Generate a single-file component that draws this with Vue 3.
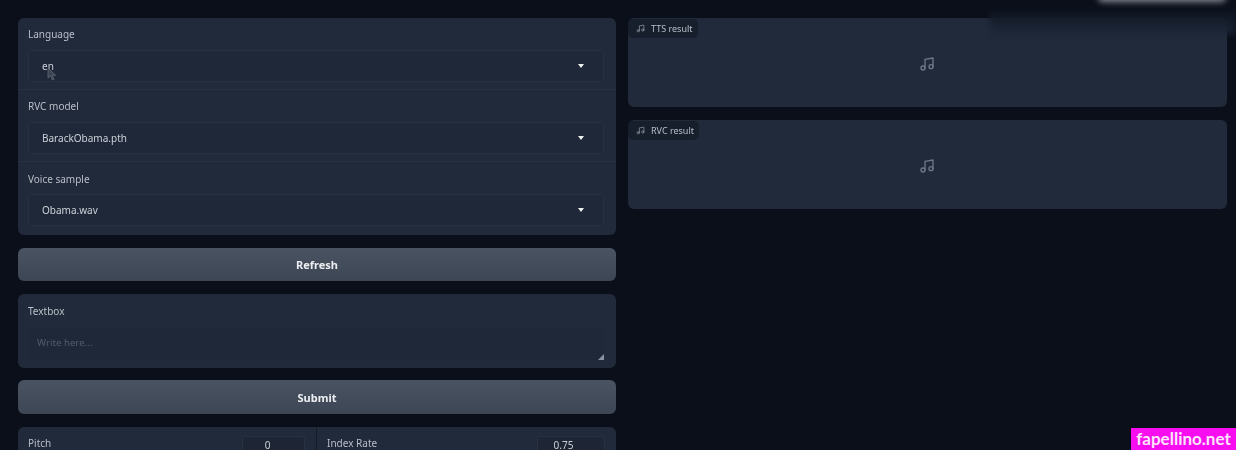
<script setup>
const selects = [
  { label: 'Language', value: 'en' },
  { label: 'RVC model', value: 'BarackObama.pth' },
  { label: 'Voice sample', value: 'Obama.wav' },
]
const results = ['TTS result', 'RVC result']
</script>

<template>
  <div class="page">
    <div class="cols">
      <div class="col">
        <div class="panel selects">
          <div v-for="s in selects" :key="s.label" class="field">
            <div class="label">{{ s.label }}</div>
            <div class="select">
              <span>{{ s.value }}</span>
              <i class="caret"></i>
            </div>
          </div>
        </div>
        <button class="btn refresh">Refresh</button>
        <div class="panel textbox">
          <div class="label">Textbox</div>
          <div class="area">
            <span class="ph">Write here...</span>
            <svg class="grip" viewBox="0 0 6 6" width="6" height="6"><path d="M6 0V6H0Z" fill="#8a93a3" /></svg>
          </div>
        </div>
        <button class="btn submit">Submit</button>
        <div class="panel sliders">
          <div class="slider">
            <span class="label">Pitch</span>
            <span class="num">0</span>
          </div>
          <div class="slider sep">
            <span class="label">Index Rate</span>
            <span class="num wide">0.75</span>
          </div>
        </div>
      </div>
      <div class="col right">
        <div v-for="r in results" :key="r" class="panel audio">
          <div class="tag">
            <svg viewBox="0 0 24 24" width="9" height="9" class="note"><path d="M9 18V5l12-2v13" /><circle cx="6" cy="18" r="3" /><circle cx="18" cy="16" r="3" /></svg>
            <span>{{ r }}</span>
          </div>
          <svg viewBox="0 0 24 24" width="16" height="16" class="note big"><path d="M9 18V5l12-2v13" /><circle cx="6" cy="18" r="3" /><circle cx="18" cy="16" r="3" /></svg>
        </div>
      </div>
    </div>
    <svg class="cursor" viewBox="0 0 10 14" width="10" height="14"><path d="M1 1V11L3.6 8.8 5.4 13 7 12.3 5.3 8.3H8.6Z" fill="#3a4452" stroke="#6f7885" stroke-width=".6" /></svg>
    <div class="shade"></div>
    <div class="smudge"></div>
    <div class="mark">fapellino.net</div>
  </div>
</template>

<style>
html, body { margin: 0; background: #0b0f19; overflow: hidden; }
</style>

<style scoped>
.page {
  position: relative;
  width: 1236px;
  height: 450px;
  overflow: hidden;
  background: #0b0f19;
  font-family: "Noto Sans", "Open Sans", sans-serif;
  color: #c9ced6;
  box-sizing: border-box;
  padding: 18px 9px 0 18px;
}
.cols { display: grid; grid-template-columns: 598px 599px; column-gap: 12px; align-items: start; filter: blur(.35px); }
.col { display: flex; flex-direction: column; gap: 13px; }
.panel { background: #212a3a; border-radius: 6px; box-sizing: border-box; }
.label { font-size: 10px; line-height: 14px; color: #b9bfc9; }
.selects { display: flex; flex-direction: column; height: 217px; }
.field { height: 72px; box-sizing: border-box; padding: 9px 12px 0 10px; border-bottom: 1px solid #27323f; }
.field:last-child { border-bottom: 0; padding-top: 10px; }
.field:last-child .select { margin-top: 8px; }
.select {
  display: flex;
  align-items: center;
  justify-content: space-between;
  height: 32px;
  margin-top: 9px;
  box-sizing: border-box;
  padding: 0 19px 0 13px;
  font-size: 10px;
  color: #ccd1d9;
  background: #1f2838;
  border: 1px solid #263141;
  border-radius: 3px;
}
.caret {
  width: 0;
  height: 0;
  border-left: 3.5px solid transparent;
  border-right: 3.5px solid transparent;
  border-top: 4px solid #eef0f3;
}
.btn {
  display: block;
  width: 100%;
  height: 34px;
  padding: 0;
  border: 0;
  border-radius: 6px;
  background: linear-gradient(to bottom, #4a5361, #3d4655);
  color: #eceef1;
  font: 700 11px "Noto Sans", sans-serif;
}
.refresh { height: 33px; }
.submit { margin-top: -1px; }
.textbox { height: 74px; padding: 10px 12px 0 10px; }
.area {
  position: relative;
  height: 33px;
  margin-top: 9px;
  padding: 9px 9px 0;
  box-sizing: border-box;
  background: #1f2838;
  border-radius: 3px;
  font-size: 9.7px;
}
.ph { color: #525c6b; }
.grip { position: absolute; right: 0; bottom: 0; }
.sliders { display: grid; grid-template-columns: 298px 300px; height: 60px; }
.slider { display: flex; justify-content: space-between; align-items: flex-start; padding: 9px 11px 0 10px; box-sizing: border-box; }
.sep { border-left: 1px solid #151c28; }
.num {
  width: 63px;
  height: 22px;
  box-sizing: border-box;
  padding: 1px 12px 0 0;
  text-align: center;
  font-size: 10px;
  color: #c9ced6;
  background: #1e2635;
  border: 1px solid #273242;
  border-radius: 3px;
}
.wide { width: 68px; padding-right: 15px; }
.audio {
  position: relative;
  height: 89px;
  display: flex;
  align-items: center;
  justify-content: center;
  padding: 2px 2px 0 0;
}
.tag {
  position: absolute;
  left: 0;
  top: 1px;
  height: 19px;
  padding: 0 5px 0 8px;
  display: flex;
  align-items: center;
  gap: 6px;
  background: #171f2c;
  border-radius: 5px;
  font-size: 9px;
  color: #b9bfc9;
}
.note { fill: none; stroke: #8c95a3; stroke-width: 2; stroke-linecap: round; stroke-linejoin: round; }
.big { stroke: #6f7887; }
.cursor { position: absolute; left: 47px; top: 67px; }
.shade {
  position: absolute;
  left: 990px;
  top: 10px;
  width: 246px;
  height: 24px;
  background: linear-gradient(to bottom, #0e1420, #1c2636 90%);
  filter: blur(3px);
  opacity: .9;
}
.smudge {
  position: absolute;
  left: 1098px;
  top: -7px;
  width: 128px;
  height: 9px;
  background: #83878f;
  border-radius: 5px;
  filter: blur(3px);
}
.mark {
  position: absolute;
  right: 0;
  bottom: 0;
  width: 105px;
  height: 22px;
  line-height: 22px;
  text-align: center;
  background: #f80df0;
  color: #fbe3fb;
  font-family: Lato, sans-serif;
  font-size: 17px;
  font-weight: 700;
}
</style>
